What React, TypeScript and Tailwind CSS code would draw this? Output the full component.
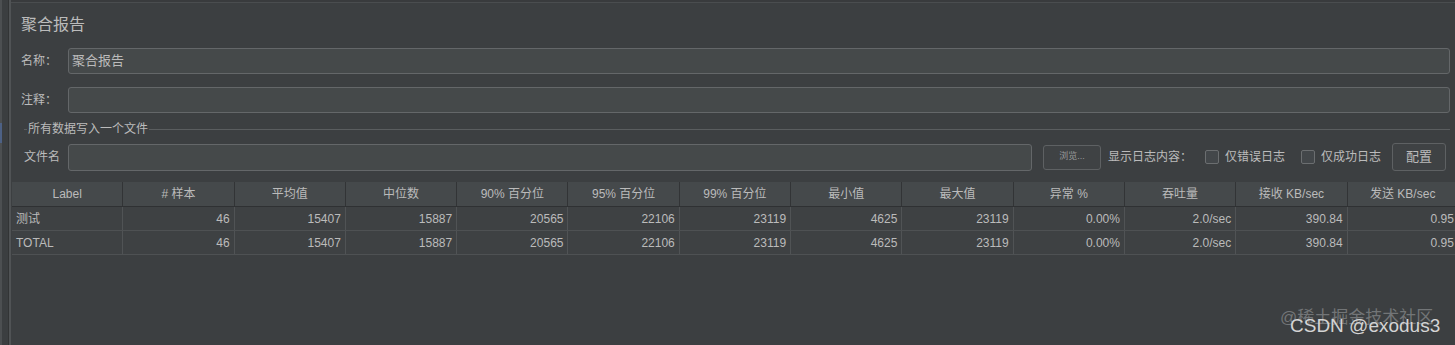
import React from 'react';

const COLUMNS = ['Label', '# 样本', '平均值', '中位数', '90% 百分位', '95% 百分位', '99% 百分位', '最小值', '最大值', '异常 %', '吞吐量', '接收 KB/sec', '发送 KB/sec'];

const ROWS = [
  ['测试', '46', '15407', '15887', '20565', '22106', '23119', '4625', '23119', '0.00%', '2.0/sec', '390.84', '0.95'],
  ['TOTAL', '46', '15407', '15887', '20565', '22106', '23119', '4625', '23119', '0.00%', '2.0/sec', '390.84', '0.95'],
];

const font = "font-['Liberation_Sans','Noto_Sans_CJK_SC',sans-serif]";

const Checkbox: React.FC<{ label: string }> = ({ label }) => (
  <div className="flex items-center gap-[6px] shrink-0">
    <div className="w-[14px] h-[14px] rounded-[2px] border border-[#6b6e70] bg-[#43474a]" />
    <span className="text-[12px] text-[#bbbbbb] whitespace-nowrap">{label}</span>
  </div>
);

const App: React.FC = () => {
  return (
    <div className={`w-[1455px] h-[345px] overflow-hidden bg-[#3c3f41] flex ${font}`}>
      {/* left gutter */}
      <div className="w-[11px] shrink-0 flex">
        <div className="w-[2px] bg-[#4c4f51] relative">
          <div className="absolute left-0 top-[123px] w-[2px] h-[20px] bg-[#4d6185]" />
        </div>
        <div className="w-[6px] bg-[#3b3e40]" />
        <div className="w-[1px] bg-[#323435]" />
        <div className="w-[2px] bg-[#505355]" />
      </div>

      <div className="flex-1 min-w-0 flex flex-col">
        <div className="h-[3px] shrink-0 bg-[#393b3d] border-b border-[#4a4d4f]" />

        <div className="pl-[10px] pt-[12px] text-[16px] leading-[20px] text-[#bbbbbb]">聚合报告</div>

        <div className="flex items-center mt-[13px] h-[26px] shrink-0">
          <span className="w-[57px] shrink-0 pl-[10px] text-[12px] text-[#bbbbbb]">名称：</span>
          <div className="w-[1382px] shrink-0 h-[26px] rounded-[3px] border border-[#646769] bg-[#45494a] flex items-center pl-[3px] text-[13px] text-[#bbbbbb]">聚合报告</div>
        </div>

        <div className="flex items-center mt-[13px] h-[26px] shrink-0">
          <span className="w-[57px] shrink-0 pl-[10px] text-[12px] text-[#bbbbbb]">注释：</span>
          <div className="w-[1382px] shrink-0 h-[26px] rounded-[3px] border border-[#646769] bg-[#45494a]" />
        </div>

        <div className="flex items-center mt-[7px] h-[18px] pl-[13px] shrink-0">
          <div className="w-[3px] h-px bg-[#5a5d5f]" />
          <span className="px-[1px] text-[12px] text-[#bbbbbb] whitespace-nowrap">所有数据写入一个文件</span>
          <div className="flex-1 h-px bg-[#5a5d5f] mr-[5px]" />
        </div>

        <div className="flex items-center mt-[5px] h-[28px] shrink-0 whitespace-nowrap">
          <span className="w-[57px] shrink-0 pl-[13px] text-[12px] text-[#bbbbbb]">文件名</span>
          <div className="w-[964px] shrink-0 h-[27px] rounded-[3px] border border-[#646769] bg-[#45494a]" />
          <div className="ml-[11px] shrink-0 w-[58px] h-[25px] rounded-[3px] border border-[#5e6163] bg-[#3f4244] flex items-center justify-center text-[9px] text-[#9a9a9a]">浏览...</div>
          <span className="ml-[7px] shrink-0 text-[12px] text-[#bbbbbb]">显示日志内容：</span>
          <div className="ml-[13px]"><Checkbox label="仅错误日志" /></div>
          <div className="ml-[16px]"><Checkbox label="仅成功日志" /></div>
          <div className="ml-[11px] shrink-0 w-[54px] h-[28px] rounded-[3px] border border-[#5e6163] bg-[#3f4244] flex items-center justify-center text-[13px] text-[#bbbbbb]">配置</div>
        </div>

        <div className="mt-[11px] ml-[1px] w-[1447px] shrink-0">
          <div className="grid grid-cols-[repeat(13,111.3px)] h-[25px] bg-[#45494b] border-b border-[#2f3133]">
            {COLUMNS.map((c) => (
              <div key={c} className="flex items-center justify-center border-r border-[#323436] text-[12px] text-[#bbbbbb] whitespace-nowrap">{c}</div>
            ))}
          </div>
          {ROWS.map((row, i) => (
            <div key={i} className="grid grid-cols-[repeat(13,111.3px)] h-[24px] bg-[#3e4143] border-b border-[#4e5153]">
              {row.map((v, j) => (
                <div
                  key={j}
                  className={`flex items-center border-r border-[#505355] text-[12px] text-[#bbbbbb] ${j === 0 ? 'justify-start pl-[4px]' : 'justify-end pr-[4px]'}`}
                >
                  {v}
                </div>
              ))}
            </div>
          ))}
        </div>

        <div className="flex-1 relative">
          <span className="absolute left-[1269px] top-[53px] text-[17px] leading-[20px] text-[#8a8c8e] opacity-70 whitespace-nowrap">@稀土掘金技术社区</span>
          <span className="absolute left-[1279px] top-[60px] text-[19px] leading-[22px] text-[#d4d4d4] whitespace-nowrap">CSDN @exodus3</span>
        </div>
      </div>
    </div>
  );
};

export default App;
